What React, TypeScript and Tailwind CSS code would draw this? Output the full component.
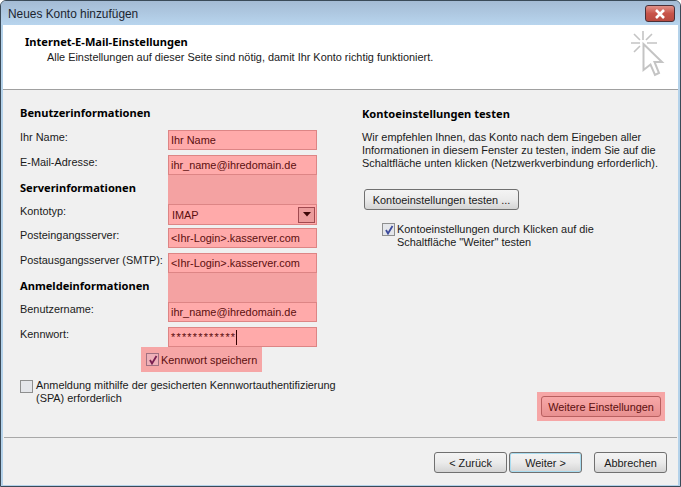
const FONT = { fontFamily: '"Liberation Sans", sans-serif' };
const BOLD = "whitespace-nowrap font-bold text-black [font-family:'Noto_Sans',sans-serif] text-[11.1px]";

function Field({ label, value, caret, spaced }: { label: string; value: string; caret?: boolean; spaced?: boolean }) {
  return (
    <div className="flex h-[25px] items-start">
      <div className="w-[148px] whitespace-nowrap text-[#1a1a1a]">{label}</div>
      <div className="flex h-[20px] w-[149px] items-center whitespace-nowrap border border-[#dd8585] bg-[#ffaaaa] pl-[2px] text-[#5c0f0f]">
        <span className={spaced ? "tracking-[1.2px]" : ""}>{value}</span>
        {caret && <span className="h-[15px] w-[1px] bg-[#300]" />}
      </div>
    </div>
  );
}

function Heading({ label }: { label: string }) {
  return (
    <div className="-mt-[5px] flex h-[29px] items-start">
      <div className={`w-[148px] pt-[6px] ${BOLD}`}>{label}</div>
      <div className="h-full w-[149px] bg-[#f4a2a2]" />
    </div>
  );
}

function Check({ checked, tone }: { checked?: boolean; tone?: "pink" }) {
  return (
    <span
      className={`flex h-[13px] w-[13px] shrink-0 items-center justify-center border ${
        tone === "pink" ? "border-[#a07080] bg-[#eeb0b8]" : "border-[#8e8f8f] bg-[#e4e6ea]"
      }`}
    >
      {checked && (
        <svg width="10" height="10" viewBox="0 0 10 10" fill="none">
          <path d="M2 5 L4 8.5 L8.5 1" stroke={tone === "pink" ? "#7a2050" : "#3c4a9c"} strokeWidth="1.8" />
        </svg>
      )}
    </span>
  );
}

function Button({ children, className }: { children: React.ReactNode; className?: string }) {
  return (
    <div
      className={`flex items-center justify-center whitespace-nowrap rounded-[3px] border border-[#707070] bg-gradient-to-b from-[#f4f4f4] via-[#ebebeb] to-[#d4d4d4] text-[#1a1a1a] ${className ?? ""}`}
    >
      {children}
    </div>
  );
}

function WizardIcon() {
  return (
    <svg width="36" height="50" viewBox="0 0 36 50" fill="none" className="mt-[5px]">
      <g stroke="#c4c4c4" strokeWidth="1.6">
        <path d="M13 1 V10 M1 13 H10 M4 4 L10 10 M22 4 L16 10 M4 22 L10 16 M17 13 H27" />
      </g>
      <path
        d="M13.5 14 L32 32 L24.5 32 L29 43 L25 45 L20.5 34.5 L13.5 40 Z"
        fill="#fff"
        stroke="#c4c4c4"
        strokeWidth="2"
      />
    </svg>
  );
}

export default function App() {
  return (
    <div
      className="flex h-[487px] w-[681px] flex-col overflow-hidden rounded-t-[6px] border border-[#3a4a58] bg-[#b4d2ea] px-[2px] pb-[1px] text-[10.9px] leading-[14px]"
      style={FONT}
    >
      {/* title bar */}
      <div className="-mx-[2px] flex h-[24px] shrink-0 items-center justify-between bg-gradient-to-b from-[#a4bbd4] to-[#b8d5ee] pl-[7px] pr-[5px]">
        <span className="mt-[2px] text-[11.9px] text-[#1c2530]">Neues Konto hinzufügen</span>
        <div className="mt-[1px] flex h-[17px] w-[30px] items-center justify-center rounded-[3px] border border-[#4a3038] bg-gradient-to-b from-[#e09088] via-[#c8544a] to-[#b84a40]">
          <svg width="12" height="10" viewBox="0 0 12 10">
            <path d="M2 1 L10 9 M10 1 L2 9" stroke="#fff" strokeWidth="2.6" />
          </svg>
        </div>
      </div>

      {/* header */}
      <div className="flex h-[65px] shrink-0 justify-between border-b border-[#a0a0a0] bg-white pl-[22px] pr-[12px]">
        <div className="pt-[10px]">
          <div className={BOLD}>Internet-E-Mail-Einstellungen</div>
          <div className="mt-[1px] pl-[22px] text-[#1a1a1a]">
            Alle Einstellungen auf dieser Seite sind nötig, damit Ihr Konto richtig funktioniert.
          </div>
        </div>
        <WizardIcon />
      </div>

      {/* body */}
      <div className="flex min-h-0 flex-1 flex-col bg-[#f0f0f0]">
        <div className="flex flex-1 pl-[17px] pr-[13px] pt-[15px]">
          <div className="w-[342px]">
            <div className={`flex h-[25px] items-start pt-[1px] ${BOLD}`}>Benutzerinformationen</div>
            <Field label="Ihr Name:" value="Ihr Name" />
            <Field label="E-Mail-Adresse:" value="ihr_name@ihredomain.de" />
            <Heading label="Serverinformationen" />
            <div className="flex h-[24px] items-start">
              <div className="w-[148px] text-[#1a1a1a]">Kontotyp:</div>
              <div className="flex h-[21px] w-[149px] items-center justify-between border border-[#dd8585] bg-[#ffaaaa] pl-[3px] pr-[1px] text-[#5c0f0f]">
                IMAP
                <span className="flex h-[16px] w-[17px] items-center justify-center border border-[#a04a50] bg-[#eb9c9c]">
                  <svg width="8" height="5" viewBox="0 0 8 5">
                    <path d="M0 0 H8 L4 4.5 Z" fill="#3c0808" />
                  </svg>
                </span>
              </div>
            </div>
            <Field label="Posteingangsserver:" value="<Ihr-Login>.kasserver.com" />
            <Field label="Postausgangsserver (SMTP):" value="<Ihr-Login>.kasserver.com" />
            <Heading label="Anmeldeinformationen" />
            <Field label="Benutzername:" value="ihr_name@ihredomain.de" />
            <Field label="Kennwort:" value="************" caret spaced />
            <div className="-mt-[5px] ml-[121px] flex h-[25px] w-[121px] items-center whitespace-nowrap bg-[#f6a6a6] pl-[5px] text-[#5c0f0f]">
              <Check checked tone="pink" />
              <span className="ml-[2px]">Kennwort speichern</span>
            </div>
            <div className="mt-[7px] flex">
              <span className="mt-[1px]">
                <Check />
              </span>
              <span className="ml-[3px] w-[312px] leading-[13px] text-[#1a1a1a]">
                Anmeldung mithilfe der gesicherten Kennwortauthentifizierung (SPA) erforderlich
              </span>
            </div>
          </div>

          <div className="flex flex-1 flex-col">
            <div className={`pt-[2px] ${BOLD}`}>Kontoeinstellungen testen</div>
            <p className="mt-[10px] leading-[13px] text-[#1a1a1a]">
              Wir empfehlen Ihnen, das Konto nach dem Eingeben aller Informationen in diesem Fenster zu testen, indem Sie auf die Schaltfläche unten klicken (Netzwerkverbindung erforderlich).
            </p>
            <Button className="ml-[2px] mt-[19px] h-[21px] w-[155px]">Kontoeinstellungen testen ...</Button>
            <div className="ml-[20px] mt-[13px] flex">
              <Check checked />
              <span className="ml-[2px] w-[215px] leading-[13px] text-[#1a1a1a]">
                Kontoeinstellungen durch Klicken auf die Schaltfläche "Weiter" testen
              </span>
            </div>
            <div className="mb-[16px] mt-auto flex h-[29px] w-[128px] items-center justify-center self-end bg-[#f6a6a6]">
              <div className="flex h-[21px] w-[120px] items-center justify-center whitespace-nowrap rounded-[3px] border border-[#b86060] bg-gradient-to-b from-[#f8a8a8] to-[#e89090] text-[#5c0f0f]">
                Weitere Einstellungen
              </div>
            </div>
          </div>
        </div>

        {/* footer */}
        <div className="mx-[1px] flex h-[48px] shrink-0 items-start justify-end border-t border-[#a8a8a8] pr-[10px] pt-[14px]">
          <Button className="h-[21px] w-[73px]">&lt; Zurück</Button>
          <Button className="ml-[2px] h-[21px] w-[73px] border-[#3c8ab8] shadow-[inset_0_0_0_1px_#a8dcf0]">Weiter &gt;</Button>
          <Button className="ml-[12px] h-[21px] w-[73px]">Abbrechen</Button>
        </div>
      </div>
    </div>
  );
}
